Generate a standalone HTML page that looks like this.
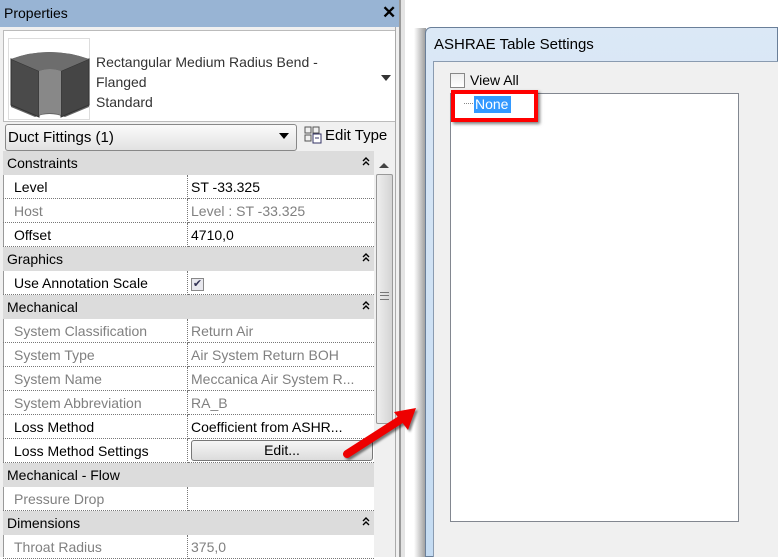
<!DOCTYPE html>
<html><head><style>
*{margin:0;padding:0;box-sizing:border-box}
body{width:778px;height:557px;overflow:hidden;background:#fff;font-family:"Liberation Sans",Arial,sans-serif;font-size:14px;position:relative;color:#000}
.a{position:absolute}
.row{position:absolute;left:3px;width:371px;height:24px;line-height:24px}
.h{background:#dcdcdc}
.h span{position:absolute;left:4px}
.h svg{position:absolute;right:4px;top:6px}
.p .l{position:absolute;left:0;width:185px;height:24px;padding-left:11px;border-right:1px dotted #777;border-bottom:1px dotted #777}
.p .v{position:absolute;left:185px;width:186px;height:24px;padding-left:3px;border-bottom:1px dotted #777;white-space:nowrap;overflow:hidden}
.g{color:#808080}
</style></head><body>
<div class="a" style="left:0;top:0;width:400px;height:27px;background:#98b4d4"></div>
<div class="a" style="left:4px;top:5px;font-size:14px">Properties</div>
<div class="a" style="left:382px;top:3px;font-size:17px;font-weight:bold">✕</div>
<div class="a" style="left:0;top:27px;width:400px;height:530px;background:#f0f0f0"></div>
<div class="a" style="left:3px;top:30px;width:393px;height:92px;background:#fff;border:1px solid #bbb"></div>
<div class="a" style="left:8px;top:38px;width:82px;height:82px;background:#fff;border:1px solid #ddd">
<svg width="82" height="82" viewBox="0 0 82 82"><path d="M2 20 Q40 6 80 20 L80 68 L56 78 Q40 72 26 78 L2 68Z" fill="#666"/><path d="M2 20 L30 32 L30 78 L2 66Z" fill="#4a4a4a" stroke="#333"/><path d="M80 20 L52 32 L52 78 L80 66Z" fill="#454545" stroke="#333"/><path d="M30 32 Q41 28 52 32 L52 76 Q41 72 30 76Z" fill="#888"/><path d="M2 20 Q40 6 80 20 L52 32 Q41 28 30 32Z" fill="#6d6d6d"/></svg></div>
<div class="a" style="left:96px;top:52px;line-height:20px;color:#333">Rectangular Medium Radius Bend -<br>Flanged<br>Standard</div>
<div class="a" style="left:381px;top:75px;border:5px solid transparent;border-top:6px solid #333"></div>
<div class="a" style="left:5px;top:124px;width:292px;height:27px;border:1px solid #888;border-radius:3px;background:linear-gradient(#fafafa,#e2e2e2)"></div>
<div class="a" style="left:8px;top:129px;font-size:15px">Duct Fittings (1)</div>
<div class="a" style="left:279px;top:133px;border:5px solid transparent;border-top:6px solid #000"></div>
<svg class="a" style="left:304px;top:126px" width="18" height="18"><rect x="1" y="1" width="6" height="6" fill="none" stroke="#555"/><rect x="9" y="1" width="6" height="6" fill="none" stroke="#555"/><rect x="1" y="9" width="6" height="6" fill="none" stroke="#555"/><rect x="9" y="8" width="8" height="9" fill="#fff" stroke="#336"/><line x1="11" y1="12" x2="15" y2="12" stroke="#336"/></svg>
<div class="a" style="left:325px;top:127px;font-size:15px">Edit Type</div>
<div class="a" style="left:3px;top:151px;width:371px;height:406px;background:#fff;border-left:1px solid #999"></div>
<div class="row h" style="top:151px"><span>Constraints</span><svg width="8" height="10"><path d="M1 4 L4 1 L7 4 M1 8 L4 5 L7 8" fill="none" stroke="#000" stroke-width="1.4"/></svg></div>
<div class="row p" style="top:175px"><div class="l">Level</div><div class="v">ST -33.325</div></div>
<div class="row p g" style="top:199px"><div class="l">Host</div><div class="v">Level : ST -33.325</div></div>
<div class="row p" style="top:223px"><div class="l">Offset</div><div class="v">4710,0</div></div>
<div class="row h" style="top:247px"><span>Graphics</span><svg width="8" height="10"><path d="M1 4 L4 1 L7 4 M1 8 L4 5 L7 8" fill="none" stroke="#000" stroke-width="1.4"/></svg></div>
<div class="row p" style="top:271px"><div class="l">Use Annotation Scale</div><div class="v"><span style="display:inline-block;width:13px;height:13px;border:1px solid #888;background:#e8e8ee;color:#335;font-size:11px;line-height:11px;text-align:center;vertical-align:middle">✔</span></div></div>
<div class="row h" style="top:295px"><span>Mechanical</span><svg width="8" height="10"><path d="M1 4 L4 1 L7 4 M1 8 L4 5 L7 8" fill="none" stroke="#000" stroke-width="1.4"/></svg></div>
<div class="row p g" style="top:319px"><div class="l">System Classification</div><div class="v">Return Air</div></div>
<div class="row p g" style="top:343px"><div class="l">System Type</div><div class="v">Air System Return BOH</div></div>
<div class="row p g" style="top:367px"><div class="l">System Name</div><div class="v">Meccanica Air System R...</div></div>
<div class="row p g" style="top:391px"><div class="l">System Abbreviation</div><div class="v">RA_B</div></div>
<div class="row p" style="top:415px"><div class="l">Loss Method</div><div class="v">Coefficient from ASHR...</div></div>
<div class="row p" style="top:439px"><div class="l">Loss Method Settings</div><div class="v"><div style="margin:1px 0 0 0;width:182px;height:21px;border:1px solid #777;border-radius:3px;background:linear-gradient(#f6f6f6,#dcdcdc);text-align:center;line-height:19px">Edit...</div></div></div>
<div class="row h" style="top:463px"><span>Mechanical - Flow</span></div>
<div class="row p g" style="top:487px"><div class="l">Pressure Drop</div><div class="v"></div></div>
<div class="row h" style="top:511px"><span>Dimensions</span><svg width="8" height="10"><path d="M1 4 L4 1 L7 4 M1 8 L4 5 L7 8" fill="none" stroke="#000" stroke-width="1.4"/></svg></div>
<div class="row p g" style="top:535px"><div class="l">Throat Radius</div><div class="v">375,0</div></div>
<div class="a" style="left:374px;top:151px;width:20px;height:406px;background:#f0f0f0"></div>
<div class="a" style="left:379px;top:158px;border:5px solid transparent;border-bottom:5px solid #444"></div>
<div class="a" style="left:376px;top:174px;width:17px;height:250px;border:1px solid #999;border-radius:2px;background:linear-gradient(90deg,#eee,#d4d4d4)"></div>
<div class="a" style="left:380px;top:292px;width:9px;height:8px;border-top:1px solid #777;border-bottom:1px solid #777"><div style="margin-top:2px;border-top:1px solid #777"></div></div>
<div class="a" style="left:395px;top:27px;width:1px;height:530px;background:#aaa"></div>
<div class="a" style="left:399px;top:0;width:2px;height:557px;background:#999"></div>
<div class="a" style="left:401px;top:0;width:4px;height:557px;background:#e4e4e4"></div>
<div class="a" style="left:414px;top:28px;width:12px;height:529px;background:linear-gradient(90deg,#fff,#999)"></div>
<div class="a" style="left:425px;top:27px;width:353px;height:530px;background:linear-gradient(#dbe8f6,#c4dbf2);border:1px solid #6a7f99;border-radius:6px 0 0 0"></div>
<div class="a" style="left:434px;top:36px;font-size:15px">ASHRAE Table Settings</div>
<div class="a" style="left:433px;top:61px;width:345px;height:496px;background:#f0f0f0;border-left:1px solid #8a9bb0;border-top:1px solid #8a9bb0"></div>
<div class="a" style="left:450px;top:73px;width:15px;height:15px;border:1px solid #888;background:linear-gradient(#eee,#fff)"></div>
<div class="a" style="left:470px;top:72px;font-size:14px">View All</div>
<div class="a" style="left:450px;top:93px;width:289px;height:429px;background:#fff;border:1px solid #828790"></div>
<div class="a" style="left:464px;top:103px;width:9px;border-top:1px dotted #888"></div>
<div class="a" style="left:474px;top:96px;width:37px;height:17px;background:#3399ff;color:#fff;font-size:14px;line-height:17px;padding-left:1px">None</div>
<div class="a" style="left:451px;top:90px;width:87px;height:32px;border:4px solid #f00;box-shadow:2px 2px 3px rgba(0,0,0,.5)"></div>
<svg class="a" style="left:330px;top:395px" width="100" height="75"><g filter="drop-shadow(2px 2px 1px rgba(0,0,0,.5))"><line x1="17" y1="59" x2="70" y2="25" stroke="#e00" stroke-width="8" stroke-linecap="round"/><polygon points="86,13 64,17 78,35" fill="#e00"/></g></svg>
</body></html>
